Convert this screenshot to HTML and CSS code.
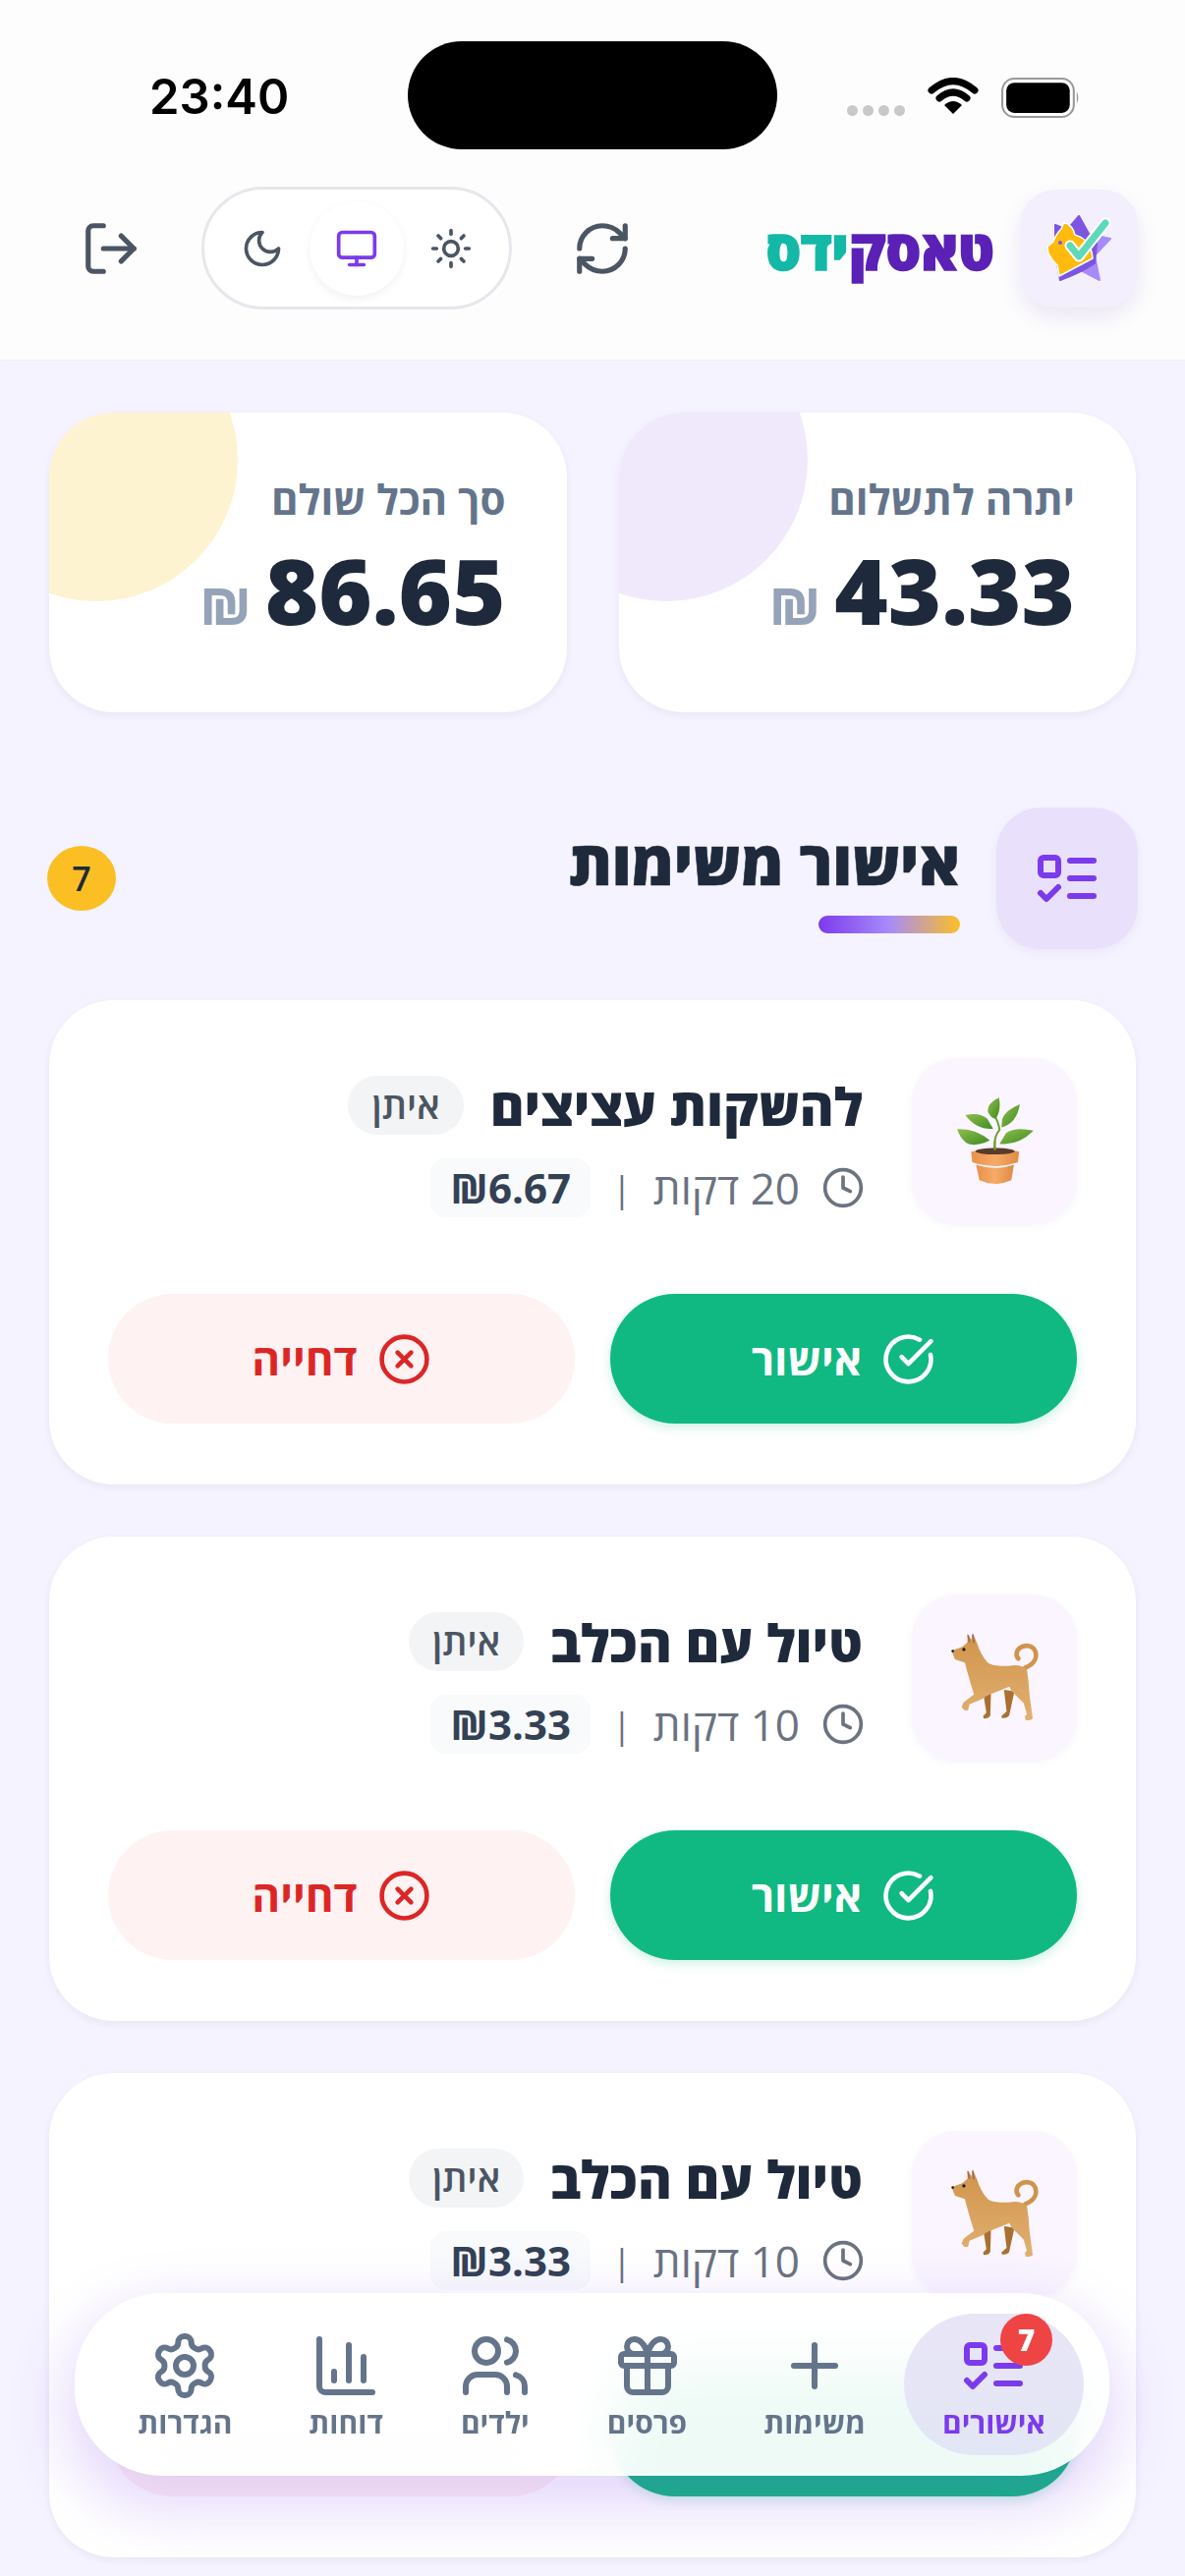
FILE: index.html
```html
<!DOCTYPE html>
<html lang="he" dir="rtl">
<head>
    <meta charset="UTF-8">
    <meta name="viewport" content="width=device-width, initial-scale=1.0">
    <title>טאסקידס</title>
    <link rel="stylesheet" href="styles.css">
</head>
<body>

<!-- shared icons -->
<svg class="sprite" aria-hidden="true">
    <defs>
        <linearGradient id="leaf" x1="0" y1="0" x2="1" y2="1">
            <stop offset="0" stop-color="#8fc04a"/>
            <stop offset="1" stop-color="#3f8a24"/>
        </linearGradient>
        <linearGradient id="pot" x1="0" y1="0" x2="1" y2="0">
            <stop offset="0" stop-color="#e8914a"/>
            <stop offset="0.5" stop-color="#f7ab66"/>
            <stop offset="1" stop-color="#e08a45"/>
        </linearGradient>
        <linearGradient id="fur" x1="0" y1="0" x2="0" y2="1">
            <stop offset="0" stop-color="#cf944c"/>
            <stop offset="1" stop-color="#e2b070"/>
        </linearGradient>
    </defs>
    <symbol id="i-list" viewBox="0 0 24 24"><rect x="3" y="5" width="6" height="6" rx="1"/><path d="m3 17 2 2 4-4"/><path d="M13 6h8"/><path d="M13 12h8"/><path d="M13 18h8"/></symbol>
    <symbol id="i-clock" viewBox="0 0 24 24"><circle cx="12" cy="12" r="10"/><polyline points="12 6 12 12 16 14"/></symbol>
    <symbol id="i-check" viewBox="0 0 24 24"><path d="M21.801 10A10 10 0 1 1 17 3.335"/><path d="m9 11 3 3L22 4"/></symbol>
    <symbol id="i-x" viewBox="0 0 24 24"><circle cx="12" cy="12" r="10"/><path d="m15 9-6 6"/><path d="m9 9 6 6"/></symbol>
    <symbol id="e-dog" viewBox="200 180 280 280">
        <path d="M432 290C462 278 470 258 464 240C456 220 430 218 416 230C404 240 404 254 412 262" fill="none" stroke="#cf944c" stroke-width="14" stroke-linecap="round"/>
        <path d="M305 372L328 368L326 436Q322 446 306 446L304 438L314 428Z" fill="#a9702f"/>
        <path d="M368 358L400 362L384 436Q378 446 362 444L360 438L376 424Z" fill="#a9702f"/>
        <path d="M208 238Q222 232 240 226L256 212L256 186L268 204L272 184L286 216Q296 250 318 274Q340 290 400 282Q426 282 438 296Q444 330 446 372L456 446Q450 454 434 450L432 440L438 432L428 398L392 362L384 348L316 376L300 386L262 402L258 420Q246 424 238 410L244 396L276 372Q266 340 252 290L248 274L218 264L212 250Z" fill="url(#fur)"/>
        <circle cx="245" cy="234" r="5" fill="#1d1a18"/>
        <circle cx="211" cy="239" r="4" fill="#1d1a18"/>
        <path d="M258 190L262 212M272 188L276 214" stroke="#a9685a" stroke-width="5"/>
    </symbol>
</svg>

<header class="top">
    <div class="status" dir="ltr">
        <span class="status-time">23:40</span>
        <span class="notch"></span>
        <div class="status-right">
            <span class="signal"><i></i><i></i><i></i><i></i></span>
            <svg class="wifi" viewBox="0 0 52 37">
                <path d="M4 13Q26 -6 48 13" fill="none" stroke="#000" stroke-width="7" stroke-linecap="round"/>
                <path d="M12 21Q26 9 40 21" fill="none" stroke="#000" stroke-width="7" stroke-linecap="round"/>
                <path d="M17 28Q26 20 35 28L26 37Z"/>
            </svg>
            <svg class="battery" viewBox="0 0 78 40">
                <rect x="1" y="1" width="71" height="38" rx="12" fill="none" stroke="#999" stroke-width="2"/>
                <rect x="5" y="5" width="63" height="30" rx="8"/>
                <path d="M75 14Q78 20 75 26Z" fill="#999"/>
            </svg>
        </div>
    </div>

    <div class="toolbar">
        <div class="brand">
            <div class="brand-box">
                <svg class="brand-logo" viewBox="0 0 68 70">
                    <path d="M34 2L44 20L66 25L50 42L55 67L34 56L15 67Z" fill="#a78bfa" stroke="#a78bfa" stroke-width="2" stroke-linejoin="round"/>
                    <path d="M34 2L44 20L52 30L50 50Q35 60 15 67L10 40L10 11L22 16Z" fill="#7c55e0" stroke="#7c55e0" stroke-width="2" stroke-linejoin="round"/>
                    <path d="M19 8C26 11 29 16 30 21C40 24 47 30 48 45L14 63L12 52C8 48 5 44 3 40L2 33L8 28C10 22 13 18 16 15Z" fill="#ffbb0d" stroke="#fff" stroke-width="1.5" stroke-linejoin="round"/>
                    <circle cx="15" cy="29" r="2" fill="#7c55e0"/>
                    <path d="M25 32L34 43L61 9" fill="none" stroke="#fff" stroke-width="11" stroke-linecap="round" stroke-linejoin="round"/>
                    <path d="M25 32L34 43L61 9" fill="none" stroke="#5fd9b8" stroke-width="7" stroke-linecap="round" stroke-linejoin="round"/>
                </svg>
            </div>
            <div class="brand-name"><span class="brand-a">טאסק</span><span class="brand-b">ידס</span></div>
        </div>

        <svg class="icon tool-icon" viewBox="0 0 24 24"><path d="M3 12a9 9 0 0 1 9-9 9.75 9.75 0 0 1 6.74 2.74L21 8"/><path d="M21 3v5h-5"/><path d="M21 12a9 9 0 0 1-9 9 9.75 9.75 0 0 1-6.74-2.74L3 16"/><path d="M8 16H3v5"/></svg>

        <div class="theme">
            <span class="theme-btn">
                <svg class="icon" viewBox="0 0 24 24"><circle cx="12" cy="12" r="4"/><path d="M12 2v2"/><path d="M12 20v2"/><path d="m4.93 4.93 1.41 1.41"/><path d="m17.66 17.66 1.41 1.41"/><path d="M2 12h2"/><path d="M20 12h2"/><path d="m6.34 17.66-1.41 1.41"/><path d="m19.07 4.93-1.41 1.41"/></svg>
            </span>
            <span class="theme-btn theme-on">
                <svg class="icon" viewBox="0 0 24 24"><rect x="2" y="3" width="20" height="14" rx="2"/><line x1="8" y1="21" x2="16" y2="21"/><line x1="12" y1="17" x2="12" y2="21"/></svg>
            </span>
            <span class="theme-btn">
                <svg class="icon" viewBox="0 0 24 24"><path d="M12 3a6 6 0 0 0 9 9 9 9 0 1 1-9-9Z"/></svg>
            </span>
        </div>

        <svg class="icon tool-icon" viewBox="0 0 24 24"><path d="M9 21H5a2 2 0 0 1-2-2V5a2 2 0 0 1 2-2h4"/><polyline points="16 17 21 12 16 7"/><line x1="21" y1="12" x2="9" y2="12"/></svg>
    </div>
</header>

<main>
    <section class="stats">
        <div class="stat stat-purple">
            <div class="stat-label">יתרה לתשלום</div>
            <div class="stat-value"><span>43.33</span><span class="stat-cur">₪</span></div>
        </div>
        <div class="stat stat-yellow">
            <div class="stat-label">סך הכל שולם</div>
            <div class="stat-value"><span>86.65</span><span class="stat-cur">₪</span></div>
        </div>
    </section>

    <section class="section-head">
        <div class="section-icon"><svg class="icon"><use href="#i-list"/></svg></div>
        <div class="section-text">
            <h2>אישור משימות</h2>
            <div class="section-bar"></div>
        </div>
        <div class="section-count">7</div>
    </section>

    <article class="task">
        <div class="task-top">
            <div class="task-emoji">
                <svg class="plant" viewBox="210 190 255 280">
                    <path d="M338 358Q332 320 352 295Q348 270 338 255" fill="none" stroke="#6da02f" stroke-width="6"/>
                    <path d="M350 197Q312 215 316 240Q325 260 340 262Q358 235 350 197Z" fill="url(#leaf)"/>
                    <path d="M414 217Q370 235 360 262L358 288Q405 275 414 217Z" fill="url(#leaf)"/>
                    <path d="M247 250Q290 240 315 262L332 292Q280 295 247 250Z" fill="url(#leaf)"/>
                    <path d="M222 293Q280 290 322 328Q275 350 250 335Q230 320 222 293Z" fill="url(#leaf)"/>
                    <path d="M456 298Q400 285 372 305L352 338Q410 345 456 298Z" fill="url(#leaf)"/>
                    <path d="M280 402Q338 422 396 402L388 450Q338 472 290 450Z" fill="url(#pot)"/>
                    <path d="M265 362Q338 345 412 362L408 395Q338 418 268 395Z" fill="url(#pot)"/>
                    <ellipse cx="338" cy="361" rx="60" ry="10" fill="#5a3a2a"/>
                    <path d="M338 358Q336 345 338 330" fill="none" stroke="#6da02f" stroke-width="6"/>
                </svg>
            </div>
            <div class="task-info">
                <div class="task-title"><span class="task-name">להשקות עציצים</span><span class="task-chip">איתן</span></div>
                <div class="task-meta">
                    <svg class="icon task-clock"><use href="#i-clock"/></svg>
                    <span>20 דקות</span>
                    <span class="task-sep">|</span>
                    <span class="task-price">₪6.67</span>
                </div>
            </div>
        </div>
        <div class="task-actions">
            <button class="btn btn-ok" type="button"><svg class="icon"><use href="#i-check"/></svg>אישור</button>
            <button class="btn btn-no" type="button"><svg class="icon"><use href="#i-x"/></svg>דחייה</button>
        </div>
    </article>

    <article class="task">
        <div class="task-top">
            <div class="task-emoji"><svg class="dog"><use href="#e-dog"/></svg></div>
            <div class="task-info">
                <div class="task-title"><span class="task-name">טיול עם הכלב</span><span class="task-chip">איתן</span></div>
                <div class="task-meta">
                    <svg class="icon task-clock"><use href="#i-clock"/></svg>
                    <span>10 דקות</span>
                    <span class="task-sep">|</span>
                    <span class="task-price">₪3.33</span>
                </div>
            </div>
        </div>
        <div class="task-actions">
            <button class="btn btn-ok" type="button"><svg class="icon"><use href="#i-check"/></svg>אישור</button>
            <button class="btn btn-no" type="button"><svg class="icon"><use href="#i-x"/></svg>דחייה</button>
        </div>
    </article>

    <article class="task">
        <div class="task-top">
            <div class="task-emoji"><svg class="dog"><use href="#e-dog"/></svg></div>
            <div class="task-info">
                <div class="task-title"><span class="task-name">טיול עם הכלב</span><span class="task-chip">איתן</span></div>
                <div class="task-meta">
                    <svg class="icon task-clock"><use href="#i-clock"/></svg>
                    <span>10 דקות</span>
                    <span class="task-sep">|</span>
                    <span class="task-price">₪3.33</span>
                </div>
            </div>
        </div>
        <!-- these two sit under the nav, only their colour shows -->
        <div class="task-actions">
            <button class="btn btn-ok" type="button" aria-label="אישור"></button>
            <button class="btn btn-no" type="button" aria-label="דחייה"></button>
        </div>
    </article>
</main>

<nav class="nav">
    <a class="nav-item nav-on">
        <span class="nav-badge">7</span>
        <svg class="icon"><use href="#i-list"/></svg>
        <span>אישורים</span>
    </a>
    <a class="nav-item">
        <svg class="icon" viewBox="0 0 24 24"><path d="M5 12h14"/><path d="M12 5v14"/></svg>
        <span>משימות</span>
    </a>
    <a class="nav-item">
        <svg class="icon" viewBox="0 0 24 24"><rect x="3" y="8" width="18" height="4" rx="1"/><path d="M12 8v13"/><path d="M19 12v7a2 2 0 0 1-2 2H7a2 2 0 0 1-2-2v-7"/><path d="M7.5 8a2.5 2.5 0 0 1 0-5A4.8 8 0 0 1 12 8a4.8 8 0 0 1 4.5-5 2.5 2.5 0 0 1 0 5"/></svg>
        <span>פרסים</span>
    </a>
    <a class="nav-item">
        <svg class="icon" viewBox="0 0 24 24"><path d="M16 21v-2a4 4 0 0 0-4-4H6a4 4 0 0 0-4 4v2"/><circle cx="9" cy="7" r="4"/><path d="M22 21v-2a4 4 0 0 0-3-3.87"/><path d="M16 3.13a4 4 0 0 1 0 7.75"/></svg>
        <span>ילדים</span>
    </a>
    <a class="nav-item">
        <svg class="icon" viewBox="0 0 24 24"><path d="M3 3v16a2 2 0 0 0 2 2h16"/><path d="M18 17V9"/><path d="M13 17V5"/><path d="M8 17v-3"/></svg>
        <span>דוחות</span>
    </a>
    <a class="nav-item">
        <svg class="icon" viewBox="0 0 24 24"><path d="M12.22 2h-.44a2 2 0 0 0-2 2v.18a2 2 0 0 1-1 1.73l-.43.25a2 2 0 0 1-2 0l-.15-.08a2 2 0 0 0-2.73.73l-.22.38a2 2 0 0 0 .73 2.73l.15.1a2 2 0 0 1 1 1.72v.51a2 2 0 0 1-1 1.74l-.15.09a2 2 0 0 0-.73 2.73l.22.38a2 2 0 0 0 2.73.73l.15-.08a2 2 0 0 1 2 0l.43.25a2 2 0 0 1 1 1.73V20a2 2 0 0 0 2 2h.44a2 2 0 0 0 2-2v-.18a2 2 0 0 1 1-1.73l.43-.25a2 2 0 0 1 2 0l.15.08a2 2 0 0 0 2.73-.73l.22-.39a2 2 0 0 0-.73-2.73l-.15-.08a2 2 0 0 1-1-1.74v-.5a2 2 0 0 1 1-1.74l.15-.09a2 2 0 0 0 .73-2.73l-.22-.38a2 2 0 0 0-2.73-.73l-.15.08a2 2 0 0 1-2 0l-.43-.25a2 2 0 0 1-1-1.73V4a2 2 0 0 0-2-2z"/><circle cx="12" cy="12" r="3"/></svg>
        <span>הגדרות</span>
    </a>
</nav>

</body>
</html>
```
FILE: styles.css
```css
* {
    box-sizing: border-box;
}
html, body {
    margin: 0;
    padding: 0;
}
body {
    position: relative;
    width: 1206px;
    height: 2622px;
    overflow: hidden;
    background-color: #f5f3ff;
    color: #1e293b;
    font-family: "Open Sans", "Noto Sans", sans-serif;
}
.sprite {
    position: absolute;
    width: 0;
    height: 0;
}
.icon {
    fill: none;
    stroke: currentColor;
    stroke-width: 2;
    stroke-linecap: round;
    stroke-linejoin: round;
    display: block;
}

/* status bar + toolbar */
.top {
    height: 366px;
    background-color: #fdfdfe;
    box-shadow: 0 1px 2px rgba(0, 0, 0, 0.03);
}
.status {
    position: relative;
    height: 170px;
    padding: 74px 107px 0 152px;
    display: flex;
    justify-content: space-between;
}
.status-time {
    font-family: Inter, sans-serif;
    font-size: 49px;
    line-height: 50px;
    font-weight: 600;
    color: #000;
}
.notch {
    position: absolute;
    left: 415px;
    top: 42px;
    width: 376px;
    height: 110px;
    border-radius: 55px;
    background-color: #000;
}
.status-right {
    display: flex;
    align-items: flex-start;
    gap: 23px;
    margin-top: 5px;
}
.signal {
    display: flex;
    gap: 5px;
    margin-top: 28px;
}
.signal i {
    display: block;
    width: 11px;
    height: 11px;
    border-radius: 50%;
    background-color: #c9c9c9;
}
.wifi {
    width: 52px;
    height: 37px;
}
.battery {
    width: 80px;
    height: 41px;
}
.toolbar {
    display: flex;
    align-items: center;
    gap: 66px;
    padding: 20px 48px 54px 87px;
    color: #4b5563;
}
.brand {
    display: flex;
    align-items: center;
    gap: 26px;
    margin-inline-end: auto;
}
.brand-box {
    width: 120px;
    height: 120px;
    border-radius: 36px;
    background-color: #f3effc;
    box-shadow: 0 10px 22px rgba(76, 29, 149, 0.1);
    display: flex;
    align-items: center;
    justify-content: center;
}
.brand-logo {
    width: 68px;
    height: 70px;
}
.brand-name {
    font-size: 56px;
    line-height: 70px;
    font-weight: 800;
    -webkit-text-stroke: 1.5px currentColor;
}
.brand-a {
    color: #5b21b6;
}
.brand-b {
    color: #14b8a6;
}
.tool-icon {
    width: 62px;
    height: 62px;
    margin: 0 -5px;
}
.theme {
    width: 316px;
    height: 125px;
    border: 3px solid #e5e7eb;
    border-radius: 63px;
    background-color: #fff;
    display: flex;
    align-items: center;
    justify-content: center;
}
.theme-btn {
    width: 96px;
    height: 96px;
    border-radius: 50%;
    display: flex;
    align-items: center;
    justify-content: center;
}
.theme-btn .icon {
    width: 44px;
    height: 44px;
}
.theme-on {
    color: #7c3aed;
    background-color: #fff;
    box-shadow: 0 3px 8px rgba(0, 0, 0, 0.06);
}

/* page */
main {
    padding: 54px 50px 0;
}
.stats {
    display: grid;
    grid-template-columns: 1fr 1fr;
    gap: 53px;
}
.stat {
    position: relative;
    overflow: hidden;
    height: 305px;
    padding: 60px 62px 0;
    border-radius: 66px;
    background-color: #fff;
    box-shadow: 0 3px 8px rgba(30, 27, 75, 0.06);
}
.stat::before {
    content: "";
    position: absolute;
    top: -96px;
    left: -96px;
    width: 288px;
    height: 288px;
    border-radius: 50%;
}
.stat-purple::before {
    background-color: #f0e9fb;
}
.stat-yellow::before {
    background-color: #fef3d0;
}
.stat-label {
    position: relative;
    font-size: 42px;
    line-height: 56px;
    font-weight: 700;
    color: #64748b;
}
.stat-value {
    position: relative;
    display: flex;
    align-items: baseline;
    gap: 14px;
    margin-top: 14px;
    font-size: 93px;
    line-height: 100px;
    font-weight: 800;
}
.stat-cur {
    font-size: 52px;
    color: #94a3b8;
}
.section-head {
    display: flex;
    align-items: center;
    gap: 37px;
    margin: 97px -2px 52px 0;
}
.section-icon {
    width: 144px;
    height: 144px;
    border-radius: 45px;
    background-color: #e9e0fc;
    color: #7c3aed;
    box-shadow: 0 4px 10px rgba(76, 29, 149, 0.06);
    display: flex;
    align-items: center;
    justify-content: center;
}
.section-icon .icon {
    width: 72px;
    height: 72px;
}
.section-text {
    display: flex;
    flex-direction: column;
    align-items: flex-start;
    gap: 20px;
    padding-top: 4px;
}
h2 {
    margin: 0;
    font-size: 62px;
    line-height: 70px;
    font-weight: 800;
    -webkit-text-stroke: 0.6px currentColor;
}
.section-bar {
    width: 144px;
    height: 18px;
    border-radius: 9px;
    background: linear-gradient(90deg, #7c3aed 0%, #a78bfa 50%, #fbbf24 100%);
}
.section-count {
    width: 70px;
    height: 66px;
    margin-inline-start: auto;
    margin-left: -2px;
    border-radius: 50%;
    background-color: #fbbf24;
    font-size: 34px;
    font-weight: 600;
    display: flex;
    align-items: center;
    justify-content: center;
}

/* task cards */
.task {
    height: 493px;
    margin-bottom: 53px;
    padding: 59px 60px 0;
    border-radius: 66px;
    background-color: #fff;
    box-shadow: 0 3px 8px rgba(30, 27, 75, 0.06);
}
.task-top {
    display: flex;
    gap: 50px;
}
.task-emoji {
    width: 168px;
    height: 168px;
    flex-shrink: 0;
    border-radius: 45px;
    background-color: #faf5ff;
    box-shadow: 0 3px 8px rgba(76, 29, 149, 0.05);
    display: flex;
    align-items: center;
    justify-content: center;
}
.plant {
    width: 85px;
    height: 93px;
}
.dog {
    width: 93px;
    height: 93px;
}
.task-info {
    padding-top: 18px;
}
.task-title {
    display: flex;
    align-items: center;
    gap: 27px;
    height: 60px;
}
.task-name {
    font-size: 53px;
    font-weight: 800;
}
.task-chip {
    height: 60px;
    padding: 0 24px;
    border-radius: 30px;
    background-color: #f3f4f6;
    color: #4b5563;
    font-size: 38px;
    font-weight: 600;
    line-height: 58px;
}
.task-meta {
    display: flex;
    align-items: center;
    gap: 22px;
    margin-top: 24px;
    font-size: 44px;
    color: #6b7280;
}
.task-clock {
    width: 44px;
    height: 44px;
    margin: 0 -2px 0 0;
}
.task-sep {
    font-size: 36px;
}
.task-price {
    height: 60px;
    padding: 0 20px;
    border-radius: 16px;
    background-color: #f8fafc;
    color: #334155;
    font-size: 42px;
    font-weight: 700;
    line-height: 60px;
}
.task-actions {
    display: flex;
    gap: 36px;
    margin-top: 72px;
}
.btn {
    flex: 1;
    height: 132px;
    border: none;
    border-radius: 66px;
    font-family: inherit;
    font-size: 44px;
    font-weight: 700;
    display: flex;
    align-items: center;
    justify-content: center;
    gap: 20px;
}
.btn .icon {
    width: 55px;
    height: 55px;
}
.btn-ok {
    background-color: #10b981;
    color: #fff;
    box-shadow: 0 4px 12px rgba(16, 185, 129, 0.2);
}
.btn-no {
    background-color: #fef2f2;
    color: #dc2626;
}

/* bottom nav, floats over the list */
.nav {
    position: absolute;
    left: 76px;
    top: 2334px;
    width: 1053px;
    height: 186px;
    padding: 0 26px;
    border-radius: 90px;
    background-color: rgba(255, 255, 255, 0.93);
    backdrop-filter: blur(30px);
    box-shadow: 0 24px 60px 10px rgba(124, 58, 237, 0.2);
    display: flex;
    align-items: center;
    justify-content: space-between;
    color: #64748b;
}
.nav-item {
    position: relative;
    height: 144px;
    padding: 17px 39px 0;
    border-radius: 72px;
    font-size: 30px;
    line-height: 40px;
    font-weight: 700;
    display: flex;
    flex-direction: column;
    align-items: center;
    gap: 2px;
}
.nav-item .icon {
    width: 72px;
    height: 72px;
}
.nav-on {
    background: linear-gradient(180deg, #e9e5f7, #e2e6f5);
    color: #7c3aed;
}
.nav-badge {
    position: absolute;
    top: 0;
    left: 98px;
    width: 53px;
    height: 53px;
    border-radius: 50%;
    background-color: #ef4444;
    color: #fff;
    font-size: 30px;
    font-weight: 800;
    display: flex;
    align-items: center;
    justify-content: center;
}
```
